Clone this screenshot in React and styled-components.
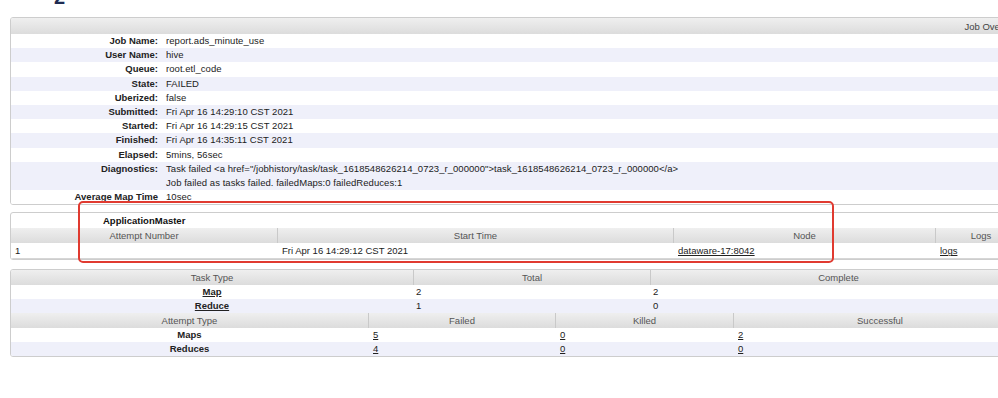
import React from 'react';
import styled, { createGlobalStyle } from 'styled-components';

const GlobalStyle = createGlobalStyle`
  html, body {
    margin: 0;
    padding: 0;
    background: #fff;
    overflow: hidden;
  }

  body {
    font-family: "Liberation Sans", Arial, sans-serif;
    font-size: 9.5px;
    color: #222;
  }
`;

const Page = styled.div`
  position: relative;
  display: flow-root;
  width: 1017px;
  padding-left: 10px;
`;

const Heading = styled.div`
  height: 20px;
  margin: -13px 0 10px 44px;
  font: bold 20px/20px "Liberation Sans", Arial, sans-serif;
  color: #1e2b52;
`;

const Panel = styled.div`
  border: 1px solid #cdcdcd;
  border-radius: 3px;
  overflow: hidden;
  background: #fff;
  margin-bottom: ${(p) => p.$gap || 0}px;
`;

const Caption = styled.div`
  height: 16px;
  line-height: 17px;
  padding-right: 4px;
  text-align: right;
  color: #444;
  background: linear-gradient(to bottom, #efefef, #dcdcdc);
`;

const InfoRow = styled.div`
  display: grid;
  grid-template-columns: 147px 1fr;
  align-items: start;
  line-height: 14.2px;
  background: ${(p) => (p.$odd ? '#eff0fa' : '#fff')};
`;

const Label = styled.div`
  text-align: right;
  font-weight: bold;
`;

const Value = styled.div`
  padding-left: 8px;
  white-space: nowrap;
  letter-spacing: 0.05px;
`;

const TitleRow = styled.div`
  height: 15px;
  line-height: 15px;
  padding-left: 92px;
  font-weight: bold;
  color: #111;
`;

const GridRow = styled.div`
  display: grid;
  grid-template-columns: ${(p) => p.$cols};
  height: ${(p) => p.$h || 14}px;
  line-height: ${(p) => p.$h || 14}px;
  background: ${(p) => (p.$odd ? '#eff0fa' : '#fff')};
  border-bottom: ${(p) => (p.$line ? '1px solid #d6d6d6' : 'none')};
`;

const HeadRow = styled(GridRow)`
  background: linear-gradient(to bottom, #efefef, #dcdcdc);
  color: #555;
`;

const HeadCell = styled.div`
  text-align: center;
  white-space: nowrap;
  & + & {
    border-left: 1px solid #c9c9c9;
  }
`;

const Cell = styled.div`
  padding-left: ${(p) => p.$pad ?? 4}px;
  white-space: nowrap;
  text-align: ${(p) => (p.$center ? 'center' : 'left')};
  font-weight: ${(p) => (p.$bold ? 'bold' : 'normal')};
`;

const Link = styled.a`
  color: #222;
  text-decoration: underline;
`;

const Highlight = styled.div`
  position: absolute;
  left: 78px;
  top: 201px;
  width: 756px;
  height: 62px;
  box-sizing: border-box;
  border: 2px solid #e03a30;
  border-radius: 5px;
  pointer-events: none;
`;

const overview = [
  ['Job Name:', 'report.ads_minute_use'],
  ['User Name:', 'hive'],
  ['Queue:', 'root.etl_code'],
  ['State:', 'FAILED'],
  ['Uberized:', 'false'],
  ['Submitted:', 'Fri Apr 16 14:29:10 CST 2021'],
  ['Started:', 'Fri Apr 16 14:29:15 CST 2021'],
  ['Finished:', 'Fri Apr 16 14:35:11 CST 2021'],
  ['Elapsed:', '5mins, 56sec'],
  [
    'Diagnostics:',
    'Task failed <a href="/jobhistory/task/task_1618548626214_0723_r_000000">task_1618548626214_0723_r_000000</a>',
    'Job failed as tasks failed. failedMaps:0 failedReduces:1',
  ],
  ['Average Map Time', '10sec'],
];

const amCols = '266px 396px 262px 1fr';
const taskCols = '402px 237px 1fr';
const attemptCols = '357px 187px 178px 1fr';

const tasks = [
  { name: 'Map', total: '2', complete: '2' },
  { name: 'Reduce', total: '1', complete: '0' },
];

const attempts = [
  { name: 'Maps', failed: '5', killed: '0', ok: '2' },
  { name: 'Reduces', failed: '4', killed: '0', ok: '0' },
];

export default function App() {
  return (
    <>
      <GlobalStyle />
      <Page>
        <Heading>2</Heading>

        <Panel $gap={7}>
          <Caption>Job Overview</Caption>
          {overview.map(([label, ...lines], i) => (
            <InfoRow key={label} $odd={i % 2 === 1}>
              <Label>{label}</Label>
              <Value>
                {lines.map((l) => (
                  <div key={l}>{l}</div>
                ))}
              </Value>
            </InfoRow>
          ))}
        </Panel>

        <Panel $gap={9}>
          <TitleRow>ApplicationMaster</TitleRow>
          <HeadRow $cols={amCols} $h={15}>
            <HeadCell>Attempt Number</HeadCell>
            <HeadCell>Start Time</HeadCell>
            <HeadCell>Node</HeadCell>
            <HeadCell>Logs</HeadCell>
          </HeadRow>
          <GridRow $cols={amCols} $h={15} $line>
            <Cell>1</Cell>
            <Cell $pad={5}>Fri Apr 16 14:29:12 CST 2021</Cell>
            <Cell $pad={5}>
              <Link href="#">dataware-17:8042</Link>
            </Cell>
            <Cell $pad={5}>
              <Link href="#">logs</Link>
            </Cell>
          </GridRow>
        </Panel>

        <Panel>
          <HeadRow $cols={taskCols} $h={15}>
            <HeadCell>Task Type</HeadCell>
            <HeadCell>Total</HeadCell>
            <HeadCell>Complete</HeadCell>
          </HeadRow>
          {tasks.map((t, i) => (
            <GridRow key={t.name} $cols={taskCols} $odd={i % 2 === 1}>
              <Cell $center $bold $pad={0}>
                <Link href="#">{t.name}</Link>
              </Cell>
              <Cell $pad={3}>{t.total}</Cell>
              <Cell $pad={3}>{t.complete}</Cell>
            </GridRow>
          ))}
          <HeadRow $cols={attemptCols} $h={15}>
            <HeadCell>Attempt Type</HeadCell>
            <HeadCell>Failed</HeadCell>
            <HeadCell>Killed</HeadCell>
            <HeadCell>Successful</HeadCell>
          </HeadRow>
          {attempts.map((a, i) => (
            <GridRow key={a.name} $cols={attemptCols} $odd={i % 2 === 1}>
              <Cell $center $bold $pad={0}>{a.name}</Cell>
              <Cell $pad={5}>
                <Link href="#">{a.failed}</Link>
              </Cell>
              <Cell $pad={5}>
                <Link href="#">{a.killed}</Link>
              </Cell>
              <Cell $pad={5}>
                <Link href="#">{a.ok}</Link>
              </Cell>
            </GridRow>
          ))}
        </Panel>

        <Highlight />
      </Page>
    </>
  );
}
